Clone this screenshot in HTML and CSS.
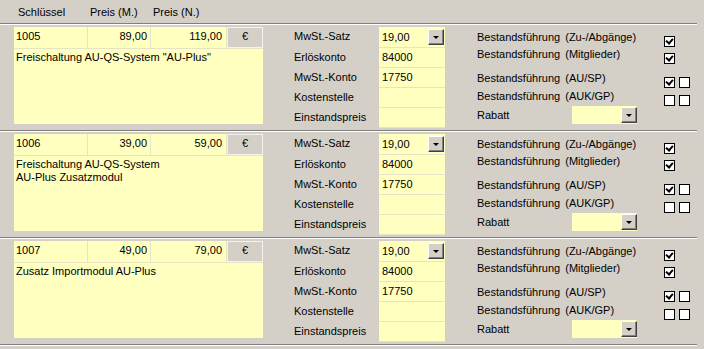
FILE: index.html
```html
<!DOCTYPE html>
<html lang="de">
<head>
    <meta charset="UTF-8">
    <meta name="viewport" content="width=device-width, initial-scale=1.0">
    <title>Artikel - Preise</title>
    <link rel="stylesheet" href="styles.css">
</head>
<body>
    <div class="page">
        <div class="head">
            <span class="head-key">Schlüssel</span>
            <span class="head-m">Preis (M.)</span>
            <span class="head-n">Preis (N.)</span>
        </div>

        <!-- Artikel 1005 -->
        <div class="block">
            <div class="left">
                <div class="top-row">
                    <div class="cell key">1005</div>
                    <div class="cell num pm">89,00</div>
                    <div class="cell num pn">119,00</div>
                    <div class="euro">€</div>
                </div>
                <div class="desc">Freischaltung AU-QS-System "AU-Plus"</div>
            </div>
            <div class="mid">
                <div class="lbl">MwSt.-Satz</div>
                <div class="inp combo-cell"><span>19,00</span><span class="drop-btn"></span></div>
                <div class="lbl">Erlöskonto</div>
                <div class="inp">84000</div>
                <div class="lbl">MwSt.-Konto</div>
                <div class="inp">17750</div>
                <div class="lbl">Kostenstelle</div>
                <div class="inp"></div>
                <div class="lbl">Einstandspreis</div>
                <div class="inp"></div>
            </div>
            <div class="right">
                <div class="opt opt-a"><span class="opt-lbl">Bestandsführung (Zu-/Abgänge)</span><span class="chk on"></span></div>
                <div class="opt opt-b"><span class="opt-lbl">Bestandsführung (Mitglieder)</span><span class="chk on"></span></div>
                <div class="opt opt-c"><span class="opt-lbl">Bestandsführung (AU/SP)</span><span class="chk on"></span><span class="chk"></span></div>
                <div class="opt opt-d"><span class="opt-lbl">Bestandsführung (AUK/GP)</span><span class="chk"></span><span class="chk"></span></div>
                <div class="opt opt-e"><span class="rabatt-lbl">Rabatt</span><span class="combo"><span class="combo-field"></span><span class="drop-btn"></span></span></div>
            </div>
        </div>

        <!-- Artikel 1006 -->
        <div class="block">
            <div class="left">
                <div class="top-row">
                    <div class="cell key">1006</div>
                    <div class="cell num pm">39,00</div>
                    <div class="cell num pn">59,00</div>
                    <div class="euro">€</div>
                </div>
                <div class="desc">Freischaltung AU-QS-System<br>AU-Plus Zusatzmodul</div>
            </div>
            <div class="mid">
                <div class="lbl">MwSt.-Satz</div>
                <div class="inp combo-cell"><span>19,00</span><span class="drop-btn"></span></div>
                <div class="lbl">Erlöskonto</div>
                <div class="inp">84000</div>
                <div class="lbl">MwSt.-Konto</div>
                <div class="inp">17750</div>
                <div class="lbl">Kostenstelle</div>
                <div class="inp"></div>
                <div class="lbl">Einstandspreis</div>
                <div class="inp"></div>
            </div>
            <div class="right">
                <div class="opt opt-a"><span class="opt-lbl">Bestandsführung (Zu-/Abgänge)</span><span class="chk on"></span></div>
                <div class="opt opt-b"><span class="opt-lbl">Bestandsführung (Mitglieder)</span><span class="chk on"></span></div>
                <div class="opt opt-c"><span class="opt-lbl">Bestandsführung (AU/SP)</span><span class="chk on"></span><span class="chk"></span></div>
                <div class="opt opt-d"><span class="opt-lbl">Bestandsführung (AUK/GP)</span><span class="chk"></span><span class="chk"></span></div>
                <div class="opt opt-e"><span class="rabatt-lbl">Rabatt</span><span class="combo"><span class="combo-field"></span><span class="drop-btn"></span></span></div>
            </div>
        </div>

        <!-- Artikel 1007 -->
        <div class="block">
            <div class="left">
                <div class="top-row">
                    <div class="cell key">1007</div>
                    <div class="cell num pm">49,00</div>
                    <div class="cell num pn">79,00</div>
                    <div class="euro">€</div>
                </div>
                <div class="desc">Zusatz Importmodul AU-Plus</div>
            </div>
            <div class="mid">
                <div class="lbl">MwSt.-Satz</div>
                <div class="inp combo-cell"><span>19,00</span><span class="drop-btn"></span></div>
                <div class="lbl">Erlöskonto</div>
                <div class="inp">84000</div>
                <div class="lbl">MwSt.-Konto</div>
                <div class="inp">17750</div>
                <div class="lbl">Kostenstelle</div>
                <div class="inp"></div>
                <div class="lbl">Einstandspreis</div>
                <div class="inp"></div>
            </div>
            <div class="right">
                <div class="opt opt-a"><span class="opt-lbl">Bestandsführung (Zu-/Abgänge)</span><span class="chk on"></span></div>
                <div class="opt opt-b"><span class="opt-lbl">Bestandsführung (Mitglieder)</span><span class="chk on"></span></div>
                <div class="opt opt-c"><span class="opt-lbl">Bestandsführung (AU/SP)</span><span class="chk on"></span><span class="chk"></span></div>
                <div class="opt opt-d"><span class="opt-lbl">Bestandsführung (AUK/GP)</span><span class="chk"></span><span class="chk"></span></div>
                <div class="opt opt-e"><span class="rabatt-lbl">Rabatt</span><span class="combo"><span class="combo-field"></span><span class="drop-btn"></span></span></div>
            </div>
        </div>
        <div class="end-line"></div>
    </div>
</body>
</html>
```

FILE: styles.css
```css
/* General Styling */
body {
    margin: 0;
    background: #d4d0c8;
    font-family: 'Liberation Sans', Arial, sans-serif;
    font-size: 11px;
    color: #000;
}

.page {
    width: 697px;
    height: 349px;
    overflow: hidden;
}

/* Header */
.head {
    height: 23px;
    display: flex;
    padding-top: 6px;
    box-sizing: border-box;
    line-height: 13px;
}

.head-key {
    margin-left: 18px;
    width: 72px;
}

.head-m {
    width: 63px;
}

/* Block (one article) */
.block {
    display: flex;
    border-top: 1px solid #808080;
    box-shadow: inset 0 1px 0 #ffffff;
    padding: 3px 0 6px 14px;
    height: 97px;
}

.end-line {
    border-top: 1px solid #808080;
    border-bottom: 1px solid #ffffff;
}

/* Left: key, prices, description */
.left {
    width: 249px;
    display: flex;
    flex-direction: column;
    gap: 1px;
    background: #e6e3c6;
}

.top-row {
    display: flex;
    gap: 1px;
    height: 21px;
}

.cell {
    background: #ffffc0;
    padding: 2px 3px 0 2px;
    line-height: 15px;
    box-sizing: border-box;
}

.key { width: 73px; }
.pm { width: 62px; }
.pn { width: 75px; padding-right: 4px; }

.num {
    text-align: right;
}

.euro {
    flex: 1;
    background: #d4d0c8;
    border: 1px solid #f4f3ef;
    text-align: center;
    line-height: 17px;
}

.desc {
    flex: 1;
    background: #ffffc0;
    padding: 2px 2px 0 2px;
    line-height: 13px;
}

/* Middle: accounts */
.mid {
    margin-left: 31px;
    display: grid;
    grid-template-columns: 85px 66px;
    grid-template-rows: 20px 19px 19px 19px 1fr;
    row-gap: 1px;
    height: 97px;
}

.lbl {
    line-height: 19px;
}

.inp {
    background: #ffffc0;
    padding-left: 3px;
    line-height: 19px;
    box-shadow: 0 1px 0 #e6e3c6;
}

.combo-cell {
    display: flex;
    justify-content: space-between;
    align-items: center;
    padding-right: 1px;
}

/* Drop-down button */
.drop-btn {
    position: relative;
    width: 16px;
    height: 16px;
    box-sizing: border-box;
    background: #d4d0c8;
    border-top: 1px solid #ffffff;
    border-left: 1px solid #ffffff;
    border-right: 1px solid #404040;
    border-bottom: 1px solid #404040;
    box-shadow: inset -1px -1px 0 #808080;
}

.drop-btn::after {
    content: "";
    position: absolute;
    left: 4px;
    top: 6px;
    border-left: 3px solid transparent;
    border-right: 3px solid transparent;
    border-top: 3px solid #000;
}

/* Right: stock options */
.right {
    margin-left: 32px;
    padding-top: 4px;
    display: flex;
    flex-direction: column;
}

.opt {
    display: flex;
    align-items: flex-start;
    line-height: 13px;
}

.opt-a { height: 17px; }
.opt-b { height: 25px; }
.opt-c { height: 18px; }
.opt-d { height: 16px; }
.opt-e { height: 18px; }

.opt-lbl {
    width: 187px;
    word-spacing: 2px;
}

.chk {
    width: 11px;
    height: 11px;
    box-sizing: border-box;
    margin-top: 5px;
    margin-right: 4px;
    background: #ffffff;
    border: 1px solid #000;
    position: relative;
}

.chk.on::after {
    content: "";
    position: absolute;
    left: 2px;
    top: 0px;
    width: 3px;
    height: 5px;
    border-right: 2px solid #000;
    border-bottom: 2px solid #000;
    transform: rotate(40deg);
}

.rabatt-lbl {
    width: 95px;
    margin-top: 3px;
}

.combo {
    display: flex;
    width: 65px;
    height: 18px;
    background: #ffffc0;
    align-items: center;
    justify-content: flex-end;
}

.combo-field {
    flex: 1;
}
```
